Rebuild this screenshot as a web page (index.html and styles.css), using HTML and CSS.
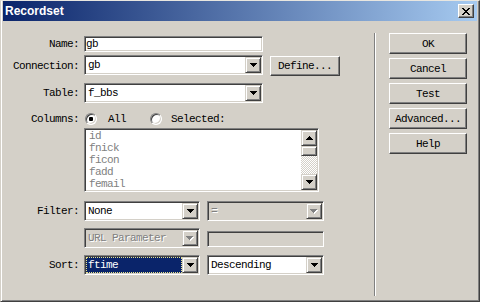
FILE: index.html
```html
<!DOCTYPE html>
<html>
<head>
<meta charset="utf-8">
<title>Recordset</title>
<link rel="stylesheet" href="styles.css">
</head>
<body>
<div class="window">
  <div class="titlebar">
    <span class="title">Recordset</span>
    <span class="close"><svg width="8" height="7" viewBox="0 0 8 7" shape-rendering="crispEdges"><path fill="#000" d="M0 0h2v1H0zM6 0h2v1H6zM1 1h2v1H1zM5 1h2v1H5zM2 2h4v1H2zM3 3h2v1H3zM2 4h4v1H2zM1 5h2v1H1zM5 5h2v1H5zM0 6h2v1H0zM6 6h2v1H6z"/></svg></span>
  </div>
  <div class="main">
    <div class="form">
      <div class="row r-name">
        <span class="lbl">Name:</span>
        <div class="edit w-long">gb</div>
      </div>
      <div class="row r-conn">
        <span class="lbl">Connection:</span>
        <div class="combo w-long"><span class="val">gb</span><span class="drop"><svg width="7" height="4" viewBox="0 0 7 4" shape-rendering="crispEdges"><path fill="#000" d="M0 0h7v1H0zM1 1h5v1H1zM2 2h3v1H2zM3 3h1v1H3z"/></svg></span></div>
        <div class="btn btn-define">Define...</div>
      </div>
      <div class="row r-table">
        <span class="lbl">Table:</span>
        <div class="combo w-long"><span class="val">f_bbs</span><span class="drop"><svg width="7" height="4" viewBox="0 0 7 4" shape-rendering="crispEdges"><path fill="#000" d="M0 0h7v1H0zM1 1h5v1H1zM2 2h3v1H2zM3 3h1v1H3z"/></svg></span></div>
      </div>
      <div class="row r-cols">
        <span class="lbl">Columns:</span>
        <span class="radio r1"><span class="dot"></span></span>
        <span class="rtext t1">All</span>
        <span class="radio r2"></span>
        <span class="rtext t2">Selected:</span>
      </div>
      <div class="row r-list">
        <div class="list">
          <div class="items">
            <div>id</div>
            <div>fnick</div>
            <div>ficon</div>
            <div>fadd</div>
            <div>femail</div>
          </div>
          <div class="sb">
            <span class="sb-btn"><svg width="7" height="4" viewBox="0 0 7 4" shape-rendering="crispEdges"><path fill="#000" d="M3 0h1v1H3zM2 1h3v1H2zM1 2h5v1H1zM0 3h7v1H0z"/></svg></span>
            <span class="sb-thumb"></span>
            <span class="sb-track"></span>
            <span class="sb-btn"><svg width="7" height="4" viewBox="0 0 7 4" shape-rendering="crispEdges"><path fill="#000" d="M0 0h7v1H0zM1 1h5v1H1zM2 2h3v1H2zM3 3h1v1H3z"/></svg></span>
          </div>
        </div>
      </div>
      <div class="row r-filter">
        <span class="lbl">Filter:</span>
        <div class="combo w-short"><span class="val">None</span><span class="drop"><svg width="7" height="4" viewBox="0 0 7 4" shape-rendering="crispEdges"><path fill="#000" d="M0 0h7v1H0zM1 1h5v1H1zM2 2h3v1H2zM3 3h1v1H3z"/></svg></span></div>
        <div class="combo w-right disabled"><span class="val">=</span><span class="drop"><svg width="8" height="5" viewBox="0 0 8 5" shape-rendering="crispEdges"><path fill="#fff" d="M1 1h7v1H1zM2 2h5v1H2zM3 3h3v1H3zM4 4h1v1H4z"/><path fill="#808080" d="M0 0h7v1H0zM1 1h5v1H1zM2 2h3v1H2zM3 3h1v1H3z"/></svg></span></div>
      </div>
      <div class="row r-url">
        <span class="lbl"></span>
        <div class="combo w-short disabled"><span class="val">URL Parameter</span><span class="drop"><svg width="8" height="5" viewBox="0 0 8 5" shape-rendering="crispEdges"><path fill="#fff" d="M1 1h7v1H1zM2 2h5v1H2zM3 3h3v1H3zM4 4h1v1H4z"/><path fill="#808080" d="M0 0h7v1H0zM1 1h5v1H1zM2 2h3v1H2zM3 3h1v1H3z"/></svg></span></div>
        <div class="edit w-right edit-disabled"></div>
      </div>
      <div class="row r-sort">
        <span class="lbl">Sort:</span>
        <div class="combo w-short"><span class="val sel">ftime</span><span class="drop"><svg width="7" height="4" viewBox="0 0 7 4" shape-rendering="crispEdges"><path fill="#000" d="M0 0h7v1H0zM1 1h5v1H1zM2 2h3v1H2zM3 3h1v1H3z"/></svg></span></div>
        <div class="combo w-right"><span class="val">Descending</span><span class="drop"><svg width="7" height="4" viewBox="0 0 7 4" shape-rendering="crispEdges"><path fill="#000" d="M0 0h7v1H0zM1 1h5v1H1zM2 2h3v1H2zM3 3h1v1H3z"/></svg></span></div>
      </div>
    </div>
    <div class="sep"></div>
    <div class="buttons">
      <div class="btn">OK</div>
      <div class="btn">Cancel</div>
      <div class="btn">Test</div>
      <div class="btn">Advanced...</div>
      <div class="btn">Help</div>
    </div>
  </div>
</div>
</body>
</html>
```
FILE: styles.css
```css
* { box-sizing: border-box; margin: 0; padding: 0; }
html, body { margin: 0; background: #d4d0c8; }
body {
  font-family: "Liberation Mono", "DejaVu Sans Mono", monospace;
  font-size: 11px;
  letter-spacing: -0.6px;
  line-height: 12px;
  color: #000;
}
.window {
  width: 480px;
  height: 302px;
  display: flex;
  flex-direction: column;
  background: #d4d0c8;
  border: 1px solid;
  border-color: #e8e6e0 #404040 #404040 #d4d0c8;
  padding: 0 2px 1px 2px;
  box-shadow: inset 1px 0 #fff, inset -1px -1px #808080;
}
.titlebar {
  height: 20px;
  flex: 0 0 20px;
  display: flex;
  align-items: center;
  justify-content: space-between;
  background: linear-gradient(to right, #0a246a, #a6caf0);
  padding: 0 3px 0 2px;
}
.title {
  font-family: "Liberation Sans", Arial, sans-serif;
  font-weight: bold;
  font-size: 12px;
  letter-spacing: 0;
  color: #fff;
}
.close {
  width: 16px;
  height: 14px;
  background: #d4d0c8;
  border: 1px solid;
  border-color: #fff #404040 #404040 #fff;
  box-shadow: inset -1px -1px #808080;
  display: flex;
  align-items: center;
  justify-content: center;
}
.close svg { display: block; }
.main { display: flex; flex: 1; }
.form {
  width: 371px;
  flex: 0 0 371px;
  padding-top: 15px;
  display: flex;
  flex-direction: column;
}
.row { display: flex; align-items: center; }
.lbl {
  width: 76px;
  flex: 0 0 76px;
  text-align: right;
  margin-right: 5px;
  white-space: nowrap;
}
.r-name { height: 16px; }
.r-conn { height: 21px; margin-top: 3px; align-items: flex-start; }
.r-conn .lbl { align-self: center; }
.r-table { height: 20px; margin-top: 7px; }
.r-cols { height: 12px; margin-top: 10px; }
.r-list { height: 64px; margin-top: 3px; padding-left: 81px; }
.r-filter { height: 20px; margin-top: 9px; }
.r-url { height: 20px; margin-top: 7px; }
.r-sort { height: 20px; margin-top: 7px; }

.w-long { width: 179px; }
.w-short { width: 116px; }
.w-right { width: 117px; margin-left: 7px; }

.sunken, .edit, .combo, .list {
  border: 1px solid;
  border-color: #808080 #fff #fff #808080;
  box-shadow: inset 1px 1px #404040, inset -1px -1px #d4d0c8;
}
.edit {
  height: 16px;
  background: #fff;
  padding: 0 1px;
  line-height: 14px;
}
.edit-disabled {
  height: 16px;
  background: #d4d0c8;
  align-self: flex-start;
  margin-top: 3px;
}
.combo {
  display: flex;
  height: 20px;
  padding: 1px;
  background: #fff;
}
.combo .val {
  flex: 1;
  padding-left: 2px;
  line-height: 16px;
  white-space: nowrap;
  overflow: hidden;
}
.combo .val.sel {
  background: #0a246a;
  color: #fff;
  border: 1px dotted #e8e48c;
  padding-left: 1px;
  line-height: 14px;
}
.combo.disabled { background: #d4d0c8; color: #808080; }
.combo.disabled .val { text-shadow: 1px 1px #fff; }
.drop, .sb-btn, .sb-thumb {
  width: 16px;
  height: 16px;
  flex: 0 0 auto;
  background: #d4d0c8;
  border: 1px solid;
  border-color: #d4d0c8 #404040 #404040 #d4d0c8;
  box-shadow: inset 1px 1px #fff, inset -1px -1px #808080;
  display: flex;
  align-items: center;
  justify-content: center;
}
.drop svg, .sb-btn svg { display: block; }

.btn {
  background: #d4d0c8;
  border: 1px solid;
  border-color: #fff #404040 #404040 #fff;
  box-shadow: inset -1px -1px #808080;
  display: flex;
  align-items: center;
  justify-content: center;
  white-space: nowrap;
}
.btn-define { width: 70px; height: 20px; margin-left: 7px; margin-top: 1px; }

.radio {
  width: 12px;
  height: 12px;
  flex: 0 0 12px;
  border-radius: 50%;
  border: 1px solid;
  border-color: #808080 #fff #fff #808080;
  box-shadow: inset 1px 1px #404040, inset -1px -1px #d4d0c8;
  background: #fff;
  display: flex;
  align-items: center;
  justify-content: center;
}
.radio .dot { width: 4px; height: 4px; background: #000; border-radius: 1px; }
.r1 { margin-left: 1px; }
.t1 { margin-left: 11px; }
.r2 { margin-left: 24px; }
.t2 { margin-left: 9px; }

.list {
  width: 235px;
  height: 64px;
  background: #fff;
  display: flex;
  padding: 1px;
}
.items {
  flex: 1;
  padding-left: 3px;
  color: #808080;
  overflow: hidden;
}
.sb { width: 16px; display: flex; flex-direction: column; }
.sb-thumb { height: 10px; }
.sb-track {
  flex: 1;
  background: repeating-conic-gradient(#fff 0 25%, #d4d0c8 0 50%) 0 0 / 2px 2px;
}

.sep {
  width: 2px;
  height: 263px;
  margin-top: 12px;
  border-left: 1px solid #808080;
  border-right: 1px solid #fff;
}
.buttons {
  display: flex;
  flex-direction: column;
  gap: 4px;
  margin-top: 12px;
  margin-left: 13px;
}
.buttons .btn { width: 78px; height: 21px; }
```
